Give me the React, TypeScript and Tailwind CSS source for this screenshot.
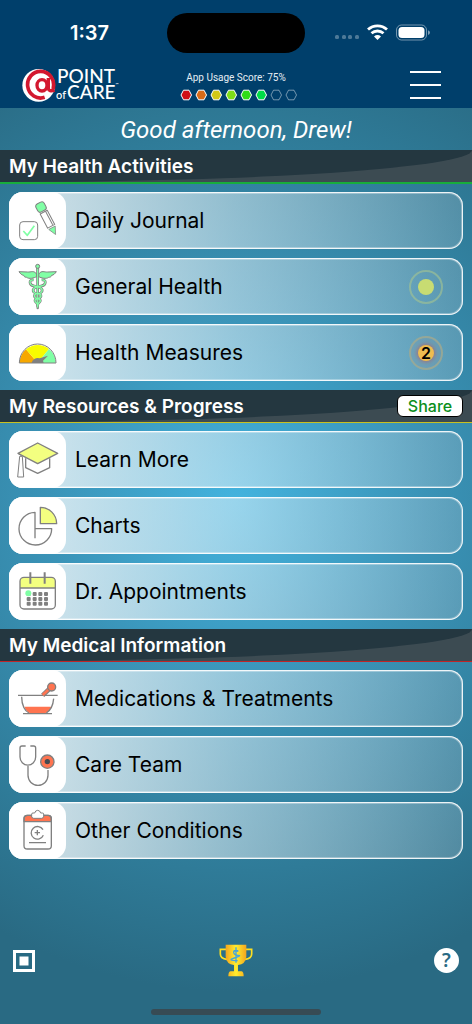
import type { ReactNode } from "react";

type Badge = { tone: "green" | "orange"; count?: number };

interface Item {
  label: string;
  icon: ReactNode;
  badge?: Badge;
}

interface SectionProps {
  title: string;
  line: string;
  items: Item[];
  action?: ReactNode;
}

const GRAY = "#808080";
const MINT = "#80ffa5";
const LEMON = "#f3ff80";
const CORAL = "#ff7450";

function Glyph({ children }: { children: ReactNode }) {
  return (
    <svg
      viewBox="0 0 171 171"
      className="size-full"
      fill="none"
      stroke={GRAY}
      strokeWidth={4}
      strokeLinejoin="round"
      aria-hidden="true"
    >
      {children}
    </svg>
  );
}

const journal = (
  <Glyph>
    <rect x="32" y="89" width="54" height="54" rx="10" strokeWidth={3} />
    <path d="M43 117l12 13 21-29" stroke={MINT} strokeWidth={5} />
    <g transform="translate(90 34) rotate(-28)" strokeWidth={3}>
      <rect x="-14" y="-1" width="28" height="27" rx="8" fill={MINT} />
      <path d="M-12 30H12V78H-12ZM6 32V76" />
      <path d="M-11 83H11L0 106Z" fill={MINT} strokeWidth={2} />
    </g>
  </Glyph>
);

const snakes =
  "M74 66C58 64 60 82 76 84C92 86 104 92 98 102C94 110 74 104 76 115C78 124 96 119 94 129C92 136 84 134 86 146" +
  "M98 66C114 64 112 82 96 84C80 86 68 92 74 102C78 110 98 104 96 115C94 124 76 119 78 129C80 136 88 134 86 146";

const caduceus = (
  <Glyph>
    <g strokeWidth={3} fill={MINT}>
      <path d="M83 48C74 36 66 43 56 42L30 41C35 48 38 51 44 52C45 57 50 58 53 58C60 64 75 60 83 56Z" />
      <path d="M89 48C98 36 106 43 116 42L142 41C137 48 134 51 128 52C127 57 122 58 119 58C112 64 97 60 89 56Z" />
      <path d="M83 28H89L88 152H84Z" />
      <circle cx="86" cy="25" r="6" />
    </g>
    <path d={snakes} strokeWidth={8} />
    <path d={snakes} stroke={MINT} strokeWidth={4} />
    <path d="M86 34V148" stroke={MINT} strokeWidth={3} />
  </Glyph>
);

const gauge = (
  <Glyph>
    <g stroke="none">
      <path d="M86 117H32A54 54 0 0 1 51 76Z" fill="#f7a800" />
      <path d="M86 117L51 76A54 54 0 0 1 120 75Z" fill="#f8fc00" />
      <path d="M86 117L120 75A54 54 0 0 1 140 117Z" fill={MINT} />
      <path d="M68 117A18 16 0 0 1 92 103L117 95L102 110L104 117Z" fill={GRAY} />
    </g>
    <path d="M31 117A55 57 0 0 1 141 117Z" strokeWidth={3} />
  </Glyph>
);

const gradCap = (
  <Glyph>
    <path d="M50 82V110L86 127L122 110V82" />
    <path d="M27 67L86 36L146 67L86 98Z" fill={LEMON} />
    <path d="M27 67L36 73M32 76L26 138H44L40 76Z" strokeWidth={3} />
  </Glyph>
);

const pie = (
  <Glyph>
    <path d="M78 124V46A49 49 0 1 0 128 95H78" />
    <path d="M94 31A49 49 0 0 1 143 80H94Z" fill={LEMON} />
  </Glyph>
);

const calendar = (
  <Glyph>
    <path d="M33 75V55Q33 43 45 43H127Q139 43 139 55V75Z" fill={LEMON} stroke="none" />
    <rect x="33" y="43" width="106" height="95" rx="12" />
    <path d="M33 75H139" />
    <path d="M64 28V62M107 28V62" strokeWidth={6} />
    <g fill={GRAY} stroke="none">
      {[93, 108, 122].map((y) =>
        [59, 77, 94, 111].map((x) => (
          <rect key={`${x}-${y}`} x={x - 6} y={y - 6} width="12" height="12" rx="3" />
        ))
      )}
    </g>
    <circle cx="58" cy="91" r="9" fill={MINT} stroke="none" />
  </Glyph>
);

const mortar = (
  <Glyph>
    <path d="M46 110H127C121 123 115 128 106 130H66C57 128 51 123 46 110Z" fill={CORAL} stroke="none" />
    <path d="M27 76H146M38 80C38 106 48 124 60 129M134 86C132 108 124 122 112 129M42 131H129" />
    <path d="M101 76L124 54" strokeWidth={14} />
    <path d="M101 75L124 54" stroke={CORAL} strokeWidth={8} />
    <circle cx="128" cy="51" r="12" fill={CORAL} />
  </Glyph>
);

const stethoscope = (
  <Glyph>
    <path d="M50 30H39Q33 30 33 36V63A23 24 0 0 0 80 63V36Q80 30 74 30H64M57 90V118A30 30 0 0 0 117 118V102" />
    <circle cx="115" cy="77" r="20" fill={CORAL} />
    <circle cx="115" cy="77" r="8" fill="#444b52" stroke="none" />
  </Glyph>
);

const clipboard = (
  <Glyph>
    <path d="M45 59V50Q45 40 55 40H117Q127 40 127 50V59Z" fill={CORAL} />
    <rect x="45" y="40" width="82" height="101" rx="10" />
    <path d="M68 46V36Q68 33 72 33H77Q79 25 86 25T95 33H100Q104 33 104 36V46L98 49H74Z" fill="white" strokeWidth={3} />
    <path d="M102 83A19 19 0 1 0 103 100M85 84V100M77 92H93M60 122H111" />
  </Glyph>
);

function StatusDot({ tone, count }: Badge) {
  const ring = tone === "green" ? "border-[#9bbf95]/70" : "border-[#a8ab8b]/70 bg-[#8a96a5]/20";
  const dot = tone === "green" ? "bg-[#c8dc72]" : "bg-[#eebc50] shadow-[0_0_4px_1px_#a0707a]";
  return (
    <span className={`flex size-[34px] items-center justify-center rounded-full border-2 ${ring}`}>
      <span className={`flex size-4 items-center justify-center rounded-full text-base font-semibold ${dot}`}>
        {count}
      </span>
    </span>
  );
}

function Row({ label, icon, badge }: Item) {
  return (
    <button
      type="button"
      className="flex h-[57px] w-full items-center rounded-[14px] bg-linear-to-r from-white/80 via-[#eef6fa]/50 to-[#c0ccd4]/25 pr-5 text-left shadow-[inset_0_0_0_1px_#ffffffd9,inset_0_0_0_2px_#ffffff50]"
    >
      <span className="size-[57px] shrink-0 rounded-[14px] bg-white">{icon}</span>
      <span className="flex-1 pl-[9px] text-[21px] text-black">{label}</span>
      {badge && <StatusDot {...badge} />}
    </button>
  );
}

function Section({ title, line, items, action }: SectionProps) {
  return (
    <section className="pb-[9px]">
      <div className={`bg-[#3c4b52] ${line}`}>
        <div className="flex h-8 items-center justify-between rounded-br-[100%] bg-[#243740] pr-[9px] pl-[9px]">
          <h2 className="pt-0.5 text-[19px] font-semibold text-white">{title}</h2>
          {action}
        </div>
      </div>
      <div className="flex flex-col gap-[9px] px-[9px] pt-2">
        {items.map((item) => (
          <Row key={item.label} {...item} />
        ))}
      </div>
    </section>
  );
}

function StatusBar() {
  return (
    <div className="grid h-[66px] grid-cols-[1fr_138px_1fr] items-center">
      <span className="pl-3 text-center text-[20px] font-semibold text-white">1:37</span>
      <div className="h-10 rounded-full bg-black" />
      <svg viewBox="0 0 96 18" className="mr-3 h-[18px] w-24 justify-self-center" fill="white" aria-hidden="true">
        <g opacity=".3">
          <rect x="0" y="11" width="4" height="4" rx="1.5" />
          <rect x="7" y="11" width="4" height="4" rx="1.5" />
          <rect x="13" y="11" width="4" height="4" rx="1.5" />
          <rect x="20" y="11" width="4" height="4" rx="1.5" />
        </g>
        <g fill="none" stroke="white" strokeWidth="2.8">
          <path d="M33 5.5A14 14 0 0 1 52 5.5" />
          <path d="M36.5 9.3A9 9 0 0 1 48.5 9.3" />
        </g>
        <path d="M42.5 16L39 12.4Q42.5 9.6 46 12.4Z" />
        <rect x="61.5" y="1" width="30" height="15" rx="5" fill="none" stroke="white" strokeOpacity=".45" />
        <rect x="63.5" y="3" width="26" height="11" rx="3.5" />
        <path d="M93 6.2Q95 7 95 8.5T93 11Z" opacity=".5" />
      </svg>
    </div>
  );
}

function Logo() {
  return (
    <div className="ml-[22px] flex items-center font-['Lato',sans-serif] leading-4 font-medium text-white">
      <svg viewBox="0 0 102 102" className="size-[34px]" fill="none" stroke="#d3182f" aria-hidden="true">
        <circle cx="50" cy="52" r="49" fill="white" stroke="none" />
        <path d="M68 88A39 40 0 1 1 94 58V64" strokeWidth="11" />
        <ellipse cx="60" cy="52" rx="15" ry="17" strokeWidth="10" />
        <path d="M79 30V62Q80 71 98 67" strokeWidth="10" />
      </svg>
      <div className="pt-0.5 whitespace-nowrap">
        <div className="pl-px text-[19px]">POINT</div>
        <div className="flex items-baseline text-[19px]">
          <span className="text-[11px]">of</span>
          <span className="pl-px">CARE</span>
        </div>
      </div>
      <span className="text-[4px]">™</span>
    </div>
  );
}

const scoreColors = ["#d01018", "#d86a18", "#d2c818", "#7edc18", "#30dc18", "#00dc48", "none", "none"];

function UsageScore() {
  return (
    <div className="flex flex-col items-center gap-1 pt-0.5">
      <span className="font-['Roboto',sans-serif] text-[10px] leading-[14px] text-[#e4edf3]">
        App Usage Score: 75%
      </span>
      <svg viewBox="0 0 118 12" className="ml-1.5 h-3 w-[118px]" aria-hidden="true">
        {scoreColors.map((color, i) => (
          <path
            key={i}
            d="M1 6L3.5 1.2H9L11.5 6L9 10.8H3.5Z"
            transform={`translate(${i * 15})`}
            fill={color}
            stroke="white"
            strokeOpacity={color === "none" ? 0.45 : 1}
          />
        ))}
      </svg>
    </div>
  );
}

function Trophy() {
  return (
    <svg viewBox="0 0 102 99" className="h-[33px] w-[34px]" aria-hidden="true">
      <defs>
        <linearGradient id="gold">
          <stop offset="0" stopColor="#f5a51e" />
          <stop offset=".5" stopColor="#ffee2e" />
          <stop offset="1" stopColor="#f5a51e" />
        </linearGradient>
      </defs>
      <path
        d="M22 16H4V30Q4 44 24 46M80 16H98V30Q98 44 78 46"
        fill="none"
        stroke="#ffdf20"
        strokeWidth="5"
      />
      <path d="M20 2H82V38Q80 60 57 63V82H68Q74 84 74 97H28Q28 84 34 82H45V63Q22 60 20 38Z" fill="url(#gold)" />
      <path
        d="M51 10V56M58 22Q42 18 44 26T58 34T46 42T56 50M44 20H58"
        fill="none"
        stroke="#4aa3d8"
        strokeWidth="4"
      />
    </svg>
  );
}

function Footer() {
  return (
    <footer className="mt-auto">
      <nav className="grid grid-cols-3 items-center px-[13px]">
        <button type="button" aria-label="Scan code" className="justify-self-start">
          <svg viewBox="0 0 22 22" className="size-[22px]" fill="none" stroke="white" aria-hidden="true">
            <path d="M1.5 1.5H20.5V20.5H1.5Z" strokeWidth="3" />
            <path d="M6.5 6.5H15.5V15.5H6.5Z" fill="white" stroke="none" />
          </svg>
        </button>
        <button type="button" aria-label="Achievements" className="justify-self-center">
          <Trophy />
        </button>
        <button
          type="button"
          aria-label="Help"
          className="flex size-[25px] items-center justify-center justify-self-end rounded-full bg-white font-['Noto_Sans',sans-serif] text-[19px] font-semibold text-[#2a6a84]"
        >
          ?
        </button>
      </nav>
      <div className="mx-auto mt-8 mb-[9px] h-[6px] w-9/25 rounded-full bg-[#374b54]" />
    </footer>
  );
}

export default function App() {
  return (
    <div className="flex min-h-screen flex-col bg-[radial-gradient(circle_at_50%_49%,#43b3de_0px,#3a93b7_190px,#2f7b98_370px,#296a83_490px)] font-['Inter',sans-serif]">
      <header className="bg-[#003f6b]">
        <StatusBar />
        <div className="grid h-[42px] grid-cols-[1fr_auto_1fr] items-center pb-2">
          <Logo />
          <UsageScore />
          <button
            type="button"
            aria-label="Menu"
            className="mr-[31px] flex h-7 w-[31px] flex-col justify-between justify-self-end"
          >
            <span className="h-[2px] w-full bg-white" />
            <span className="h-[2px] w-full bg-white" />
            <span className="h-[2px] w-full bg-white" />
          </button>
        </div>
      </header>

      <main>
        <h1 className="pt-1.5 pb-1 text-center font-['Roboto',sans-serif] text-[24px] leading-8 text-white italic">
          Good afternoon, Drew!
        </h1>
        <Section
          title="My Health Activities"
          line="border-b-2 border-[#18ad3c]"
          items={[
            { label: "Daily Journal", icon: journal },
            { label: "General Health", icon: caduceus, badge: { tone: "green" } },
            { label: "Health Measures", icon: gauge, badge: { tone: "orange", count: 2 } },
          ]}
        />
        <Section
          title="My Resources & Progress"
          line="border-b border-[#c8c020]"
          action={
            <button
              type="button"
              className="h-[22px] w-[66px] rounded-[6px] border border-black bg-white text-[16px] leading-5 font-medium text-[#0c8f1c]"
            >
              Share
            </button>
          }
          items={[
            { label: "Learn More", icon: gradCap },
            { label: "Charts", icon: pie },
            { label: "Dr. Appointments", icon: calendar },
          ]}
        />
        <Section
          title="My Medical Information"
          line="border-b border-[#c02428]"
          items={[
            { label: "Medications & Treatments", icon: mortar },
            { label: "Care Team", icon: stethoscope },
            { label: "Other Conditions", icon: clipboard },
          ]}
        />
      </main>

      <Footer />
    </div>
  );
}
